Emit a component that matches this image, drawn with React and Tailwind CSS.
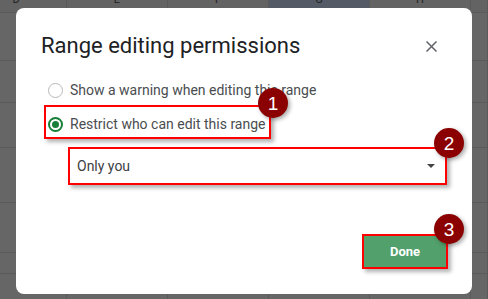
import React from "react";

const cols = [
  { w: 101, l: "D", first: true },
  { w: 101, l: "E" },
  { w: 101, l: "F" },
  { w: 101, l: "G", sel: true },
  { w: 101, l: "H" },
  { w: 17, l: "" },
];

const rows = [48, 42, 45, 55, 50, 21, 40];

function Badge({ n, className }) {
  return (
    <div
      className={
        "absolute w-[30px] h-[30px] rounded-full bg-[#8b0000] text-white flex items-center justify-center text-[19px] leading-none shadow-[2px_2px_4px_rgba(0,0,0,0.35)] " +
        className
      }
      style={{ fontFamily: '"Liberation Sans", Arial, sans-serif' }}
    >
      {n}
    </div>
  );
}

export default function App() {
  return (
    <div
      className="relative w-[488px] h-[299px] overflow-hidden bg-[#666666]"
      style={{ fontFamily: 'Roboto, "Liberation Sans", Arial, sans-serif' }}
    >
      {/* spreadsheet background */}
      <div className="flex flex-col ml-[-34px]">
        <div className="flex h-[13px] border-b border-[#5a5a5a] bg-[#636363]">
          {cols.map((c, i) => (
            <div
              key={i}
              className={
                "shrink-0 flex justify-center border-r border-[#5a5a5a] overflow-hidden " +
                (c.sel ? "bg-[#545b67]" : "")
              }
              style={{ width: c.w }}
            >
              <span className="text-[11px] leading-none mt-[-6px] text-[#1f1f1f]">{c.l}</span>
            </div>
          ))}
        </div>
        {rows.map((h, r) => (
          <div key={r} className="flex border-b border-[#5a5a5a]" style={{ height: h }}>
            {cols.map((c, i) => (
              <div
                key={i}
                className="shrink-0 border-r border-[#5a5a5a]"
                style={{ width: c.w }}
              />
            ))}
          </div>
        ))}
      </div>

      {/* dialog */}
      <div className="absolute left-[16px] top-[8px] w-[456px] h-[286px] rounded-[8px] bg-white pt-[24px] px-[25px]">
        <div className="flex items-start justify-between h-[28px]">
          <div className="text-[22px] leading-[28px] text-[#202124] whitespace-nowrap">
            Range editing permissions
          </div>
          <div className="h-[28px] flex items-center mr-[10px]">
            <svg width="11" height="11" viewBox="0 0 11 11">
              <path d="M0.5 0.5 L10.5 10.5 M10.5 0.5 L0.5 10.5" stroke="#5f6368" strokeWidth="1.5" fill="none" />
            </svg>
          </div>
        </div>

        <div className="mt-[11px] ml-[3px] w-[227px] h-[34px] border-2 border-transparent pt-[5px] pl-[2px] flex items-center">
          <div className="w-[15px] h-[15px] rounded-full border border-[#b9b9b9] shrink-0" />
          <span className="ml-[7px] text-[14px] text-[#4a4d50] whitespace-nowrap">
            Show a warning when editing this range
          </span>
        </div>

        <div className="relative ml-[3px] w-[227px] h-[34px] border-2 border-[#ff0000] pt-[5px] pl-[2px] flex items-center shadow-[3px_3px_4px_rgba(0,0,0,0.3)]">
          <div className="w-[15px] h-[15px] rounded-full border-2 border-[#188038] shrink-0 flex items-center justify-center">
            <div className="w-[7px] h-[7px] rounded-full bg-[#188038]" />
          </div>
          <span className="ml-[7px] text-[14px] text-[#4a4d50] whitespace-nowrap">
            Restrict who can edit this range
          </span>
          <Badge n="1" className="-right-[19px] -top-[19px]" />
        </div>

        <div className="relative mt-[8px] ml-[27px] w-[379px] h-[38px] border-2 border-[#ff0000] flex items-center justify-between pl-[7px] pr-[10px] shadow-[3px_3px_4px_rgba(0,0,0,0.3)]">
          <span className="text-[14px] text-[#3c4043]">Only you</span>
          <svg width="8" height="4" viewBox="0 0 8 4">
            <path d="M0 0 L8 0 L4 4 Z" fill="#444" />
          </svg>
          <Badge n="2" className="-right-[19px] -top-[21px]" />
        </div>

        <div className="mt-[49px] flex justify-end mr-[-1px]">
          <div className="relative w-[86px] h-[35px] border-2 border-[#ff0000] bg-[#52a06b] flex items-center justify-center shadow-[3px_3px_4px_rgba(0,0,0,0.3)]">
            <span className="text-[13px] font-bold text-white">Done</span>
            <Badge n="3" className="-right-[18px] -top-[22px]" />
          </div>
        </div>
      </div>
    </div>
  );
}
